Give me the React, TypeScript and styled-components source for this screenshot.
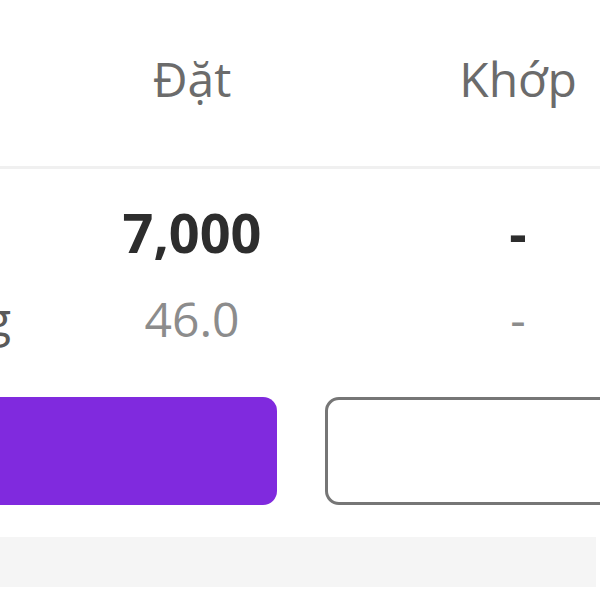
import styled, { createGlobalStyle } from "styled-components";

const GlobalStyle = createGlobalStyle`
  html, body {
    margin: 0;
    padding: 0;
    background: #ffffff;
  }
  body {
    font-family: "Open Sans", "Noto Sans", sans-serif;
    overflow: hidden;
  }
`;

const Screen = styled.div`
  width: 600px;
  height: 600px;
  overflow: hidden;
  background: #ffffff;
`;

const Table = styled.div`
  margin-left: -300px;
  width: 981px;
`;

const Row = styled.div<{ $head?: boolean }>`
  display: grid;
  grid-template-columns: 329px 326px 326px;
  align-items: center;
  ${({ $head }) =>
    $head
      ? `
    padding: 55px 0 63px;
    border-bottom: 3px solid #f0f0f0;
  `
      : ""}
`;

const Body = styled.div`
  display: flex;
  flex-direction: column;
  gap: 36px;
  padding-top: 36px;
`;

const Label = styled.div`
  font-size: 48px;
  line-height: 48px;
  color: #5a5a5a;
  white-space: nowrap;
  padding-left: 70px;
`;

const HeadCell = styled.div`
  font-size: 48px;
  line-height: 48px;
  color: #6b6b6b;
  text-align: center;
`;

const Value = styled.div<{ $strong?: boolean }>`
  text-align: center;
  white-space: nowrap;
  font-size: ${({ $strong }) => ($strong ? "54px" : "48px")};
  line-height: ${({ $strong }) => ($strong ? "54px" : "48px")};
  font-weight: ${({ $strong }) => ($strong ? 700 : 400)};
  color: ${({ $strong }) => ($strong ? "#2d2d2d" : "#8c8c8c")};
`;

const Actions = styled.div`
  display: flex;
  gap: 48px;
  margin: 54px 0 0 -23px;
`;

const Button = styled.button<{ $primary?: boolean }>`
  flex: 0 0 300px;
  height: 108px;
  border-radius: 14px;
  box-sizing: border-box;
  background: ${({ $primary }) => ($primary ? "#802ade" : "#ffffff")};
  border: ${({ $primary }) => ($primary ? "none" : "3px solid #767676")};
  padding: 0;
`;

const Footer = styled.div`
  width: 596px;
  height: 50px;
  margin-top: 32px;
  background: #f5f5f5;
`;

const rows = [
  { label: "Giá", placed: "7,000", matched: "-", strong: true },
  { label: "Khối lượng", placed: "46.0", matched: "-", strong: false },
];

export default function App() {
  return (
    <>
      <GlobalStyle />
      <Screen>
        <Table>
          <Row $head>
            <Label />
            <HeadCell>Đặt</HeadCell>
            <HeadCell>Khớp</HeadCell>
          </Row>
          <Body>
            {rows.map((r) => (
              <Row key={r.label}>
                <Label>{r.label}</Label>
                <Value $strong={r.strong}>{r.placed}</Value>
                <Value $strong={r.strong}>{r.matched}</Value>
              </Row>
            ))}
          </Body>
        </Table>
        <Actions>
          <Button $primary />
          <Button />
        </Actions>
        <Footer />
      </Screen>
    </>
  );
}
